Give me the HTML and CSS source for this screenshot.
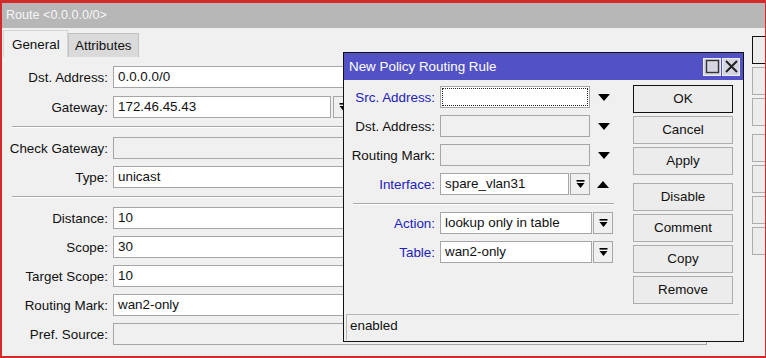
FILE: index.html
```html
<!DOCTYPE html>
<html>
<head>
<meta charset="utf-8">
<link rel="stylesheet" href="styles.css">
</head>
<body>
<div class="screen">
  <div class="route-title">Route &lt;0.0.0.0/0&gt;</div>
  <div class="route-body">
    <div class="route-main">
      <div class="tabs">
        <div class="tab active">General</div>
        <div class="tab">Attributes</div>
      </div>
      <div class="panel">
        <div class="group group-first">
          <div class="row"><span class="lbl">Dst. Address:</span><div class="field">0.0.0.0/0</div></div>
          <div class="row"><span class="lbl">Gateway:</span><div class="field-combo"><div class="field field-gw">172.46.45.43</div><div class="dd-btn"><svg width="9" height="9" viewBox="0 0 9 9"><rect x="0.5" y="0" width="8" height="1.6" fill="#000"/><path d="M0.5 3H8.5L4.5 8Z" fill="#000"/></svg></div></div></div>
        </div>
        <div class="sep"></div>
        <div class="group">
          <div class="row"><span class="lbl">Check Gateway:</span><div class="field disabled"></div></div>
          <div class="row"><span class="lbl">Type:</span><div class="field">unicast</div></div>
        </div>
        <div class="sep"></div>
        <div class="group">
          <div class="row"><span class="lbl">Distance:</span><div class="field">10</div></div>
          <div class="row"><span class="lbl">Scope:</span><div class="field">30</div></div>
          <div class="row"><span class="lbl">Target Scope:</span><div class="field">10</div></div>
          <div class="row"><span class="lbl">Routing Mark:</span><div class="field">wan2-only</div></div>
          <div class="row"><span class="lbl">Pref. Source:</span><div class="field disabled"></div></div>
        </div>
      </div>
    </div>
    <div class="side-buttons">
      <div class="btn default"></div>
      <div class="btn"></div>
      <div class="btn"></div>
      <div class="btn gap"></div>
      <div class="btn"></div>
      <div class="btn"></div>
      <div class="btn"></div>
    </div>
  </div>
</div>

<div class="dialog">
  <div class="dlg-title">
    <span class="dlg-title-text">New Policy Routing Rule</span>
    <div class="dlg-ctrls">
      <div class="ctrl"><svg width="15" height="15" viewBox="0 0 15 15"><rect x="1.5" y="1.5" width="12" height="12" fill="none" stroke="#333" stroke-width="1.4"/></svg></div>
      <div class="ctrl"><svg width="15" height="15" viewBox="0 0 15 15"><path d="M2 2L13 13M13 2L2 13" stroke="#222" stroke-width="2"/></svg></div>
    </div>
  </div>
  <div class="dlg-main">
    <div class="dlg-form">
      <div class="drow"><span class="dlbl blue">Src. Address:</span><div class="dfield w150 focus"></div><svg class="tri" width="12" height="7" viewBox="0 0 12 7"><path d="M0 0H12L6 7Z" fill="#000"/></svg></div>
      <div class="drow"><span class="dlbl">Dst. Address:</span><div class="dfield w150 off"></div><svg class="tri" width="12" height="7" viewBox="0 0 12 7"><path d="M0 0H12L6 7Z" fill="#000"/></svg></div>
      <div class="drow"><span class="dlbl">Routing Mark:</span><div class="dfield w150 off"></div><svg class="tri" width="12" height="7" viewBox="0 0 12 7"><path d="M0 0H12L6 7Z" fill="#000"/></svg></div>
      <div class="drow"><span class="dlbl blue">Interface:</span><div class="dfield w129">spare_vlan31</div><div class="dd-btn"><svg width="9" height="9" viewBox="0 0 9 9"><rect x="0.5" y="0" width="8" height="1.6" fill="#000"/><path d="M0.5 3H8.5L4.5 8Z" fill="#000"/></svg></div><svg class="tri" width="12" height="7" viewBox="0 0 12 7"><path d="M0 7H12L6 0Z" fill="#000"/></svg></div>
      <div class="dsep"></div>
      <div class="drow"><span class="dlbl blue">Action:</span><div class="dfield w152">lookup only in table</div><div class="dd-btn"><svg width="9" height="9" viewBox="0 0 9 9"><rect x="0.5" y="0" width="8" height="1.6" fill="#000"/><path d="M0.5 3H8.5L4.5 8Z" fill="#000"/></svg></div></div>
      <div class="drow"><span class="dlbl blue">Table:</span><div class="dfield w152">wan2-only</div><div class="dd-btn"><svg width="9" height="9" viewBox="0 0 9 9"><rect x="0.5" y="0" width="8" height="1.6" fill="#000"/><path d="M0.5 3H8.5L4.5 8Z" fill="#000"/></svg></div></div>
    </div>
    <div class="dlg-buttons">
      <div class="btn default">OK</div>
      <div class="btn">Cancel</div>
      <div class="btn">Apply</div>
      <div class="btn gap">Disable</div>
      <div class="btn">Comment</div>
      <div class="btn">Copy</div>
      <div class="btn">Remove</div>
    </div>
  </div>
  <div class="status">enabled</div>
</div>
</body>
</html>
```
FILE: styles.css
```css
html, body {
  margin: 0;
  padding: 0;
}
body {
  position: relative;
  width: 766px;
  height: 358px;
  overflow: hidden;
  font-family: "Liberation Sans", Arial, sans-serif;
  font-size: 13.4px;
  color: #111;
  background: #f0f0f0;
}
.screen {
  box-sizing: border-box;
  width: 766px;
  height: 358px;
  border: 2px solid #d42a2a;
  border-top-width: 3px;
  border-right-width: 1px;
  background: #f0f0f0;
  overflow: hidden;
  display: flex;
  flex-direction: column;
}
.route-title {
  height: 25px;
  line-height: 25px;
  font-size: 12.6px;
  background: #b7b7b7;
  color: #f6f6f6;
  padding-left: 4px;
  flex: none;
}
.route-body {
  display: flex;
  flex: 1;
}
.route-main {
  width: 705px;
  padding-right: 38px;
  flex: none;
}
.tabs {
  display: flex;
  align-items: flex-end;
  height: 29px;
  padding-left: 1px;
  box-sizing: border-box;
}
.tab {
  box-sizing: border-box;
  height: 24px;
  padding: 0 6px;
  line-height: 23px;
  background: #dadada;
  border: 1px solid #c2c2c2;
  border-bottom: none;
  color: #111;
}
.tab.active {
  height: 27px;
  width: 65px;
  padding: 0 8px;
  line-height: 27px;
  background: #f0f0f0;
  border-color: #d6d6d6;
}
.panel {
  padding-top: 9px;
}
.group {
  display: flex;
  flex-direction: column;
  gap: 7px;
}
.group-first {
  gap: 8px;
}
.row {
  display: grid;
  grid-template-columns: 106px 1fr;
  column-gap: 5px;
  align-items: center;
}
.lbl {
  text-align: right;
  white-space: nowrap;
}
.field {
  box-sizing: border-box;
  height: 22px;
  line-height: 20px;
  background: #fff;
  border: 1px solid #a6a6a6;
  padding-left: 4px;
  color: #111;
}
.field.disabled {
  background: #f0f0f0;
}
.field-combo {
  display: flex;
  gap: 2px;
}
.field-gw {
  width: 218px;
}
.dd-btn {
  box-sizing: border-box;
  width: 20px;
  height: 22px;
  border: 1px solid #a6a6a6;
  background: #f0f0f0;
  display: flex;
  align-items: center;
  justify-content: center;
  flex: none;
}
.sep {
  height: 1px;
  background: #a8a8a8;
  border-bottom: 1px solid #fff;
  margin: 8px 0 9px 10px;
}
.side-buttons {
  margin-left: 7px;
  padding-top: 8px;
  display: flex;
  flex-direction: column;
  gap: 3px;
  flex: none;
  width: 100px;
}
.btn {
  box-sizing: border-box;
  width: 100px;
  height: 28px;
  line-height: 26px;
  text-align: center;
  background: #ececec;
  border: 1px solid #adadad;
  color: #111;
}
.btn.default {
  border-color: #111;
}
.btn.gap {
  margin-top: 5px;
}

/* dialog window */
.dialog {
  position: absolute;
  left: 343px;
  top: 52px;
  width: 401px;
  height: 290px;
  box-sizing: border-box;
  border: 1px solid #111;
  background: #f0f0f0;
  display: flex;
  flex-direction: column;
}
.dlg-title {
  height: 27px;
  background: #5252c6;
  color: #fff;
  display: flex;
  align-items: center;
  justify-content: space-between;
  padding: 0 3px 0 5px;
  flex: none;
}
.dlg-ctrls {
  display: flex;
  gap: 1px;
}
.ctrl {
  box-sizing: border-box;
  width: 18px;
  height: 18px;
  background: #d6d6e2;
  border: 1px solid #eaeaf2;
  display: flex;
  align-items: center;
  justify-content: center;
}
.dlg-main {
  display: flex;
  flex: 1;
}
.dlg-form {
  width: 270px;
  padding-top: 6px;
  display: flex;
  flex-direction: column;
  gap: 7px;
}
.drow {
  display: flex;
  align-items: center;
  height: 22px;
}
.dlbl {
  width: 91px;
  margin-right: 5px;
  text-align: right;
  white-space: nowrap;
  flex: none;
}
.dlbl.blue {
  color: #2222bb;
}
.dfield {
  box-sizing: border-box;
  height: 22px;
  line-height: 20px;
  background: #fff;
  border: 1px solid #a6a6a6;
  padding-left: 4px;
  flex: none;
  margin-right: 1px;
}
.dfield.off {
  background: #f0f0f0;
}
.dfield.focus {
  outline: 1px dotted #222;
  outline-offset: -3px;
}
.w150 { width: 150px; }
.w129 { width: 129px; }
.w152 { width: 152px; }
.tri {
  margin-left: 7px;
  flex: none;
}
.dsep {
  height: 1px;
  background: #a8a8a8;
  border-bottom: 1px solid #fff;
  margin: 1px 0 0 9px;
  width: 261px;
}
.dlg-buttons {
  margin-left: 19px;
  padding-top: 5px;
  display: flex;
  flex-direction: column;
  gap: 3px;
}
.status {
  box-sizing: border-box;
  height: 26px;
  margin: 0 4px 1px 2px;
  border-top: 1px solid #b8b8b8;
  border-left: 1px solid #b8b8b8;
  padding-left: 3px;
  line-height: 22px;
  color: #111;
}
```
